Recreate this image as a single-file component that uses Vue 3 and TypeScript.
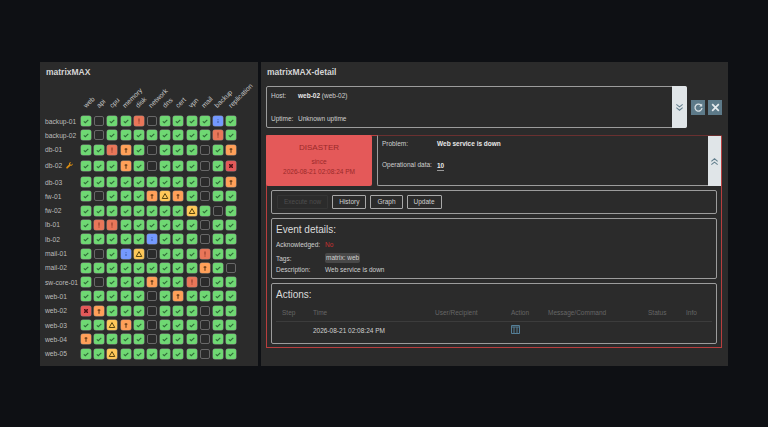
<template>
  <div class="page">
    <!-- 左侧矩阵面板 -->
    <section class="panel matrix-panel">
      <h2 class="panel-title">matrixMAX</h2>
      <div class="matrix-head">
        <div class="host-col"></div>
        <div v-for="c in columns" :key="c" class="col-head"><span>{{ c }}</span></div>
      </div>
      <div v-for="row in rows" :key="row.host" class="matrix-row" :class="{ tall: row.wrench }">
        <div class="host-col host-name">
          {{ row.host }}
          <svg v-if="row.wrench" class="wrench" viewBox="0 0 10 10" width="7" height="7">
            <path d="M9.500 2.200 7.800 3.900 6.200 3.600 5.900 2.100 7.600.5C6.200 0 4.800.5 4.300 1.800c-.2.6-.2 1.100 0 1.700L.6 7.300c-.5.500-.5 1.300 0 1.800s1.300.5 1.800 0l3.900-3.700c1.700.4 3.500-1 3.400-2.900z" fill="#d98c12" />
          </svg>
        </div>
        <div v-for="(s, i) in row.cells.split('')" :key="i" class="cell" :class="'s-' + s">
          <svg v-if="s === 'o'" viewBox="0 0 10 10" width="10" height="10">
            <path d="M2.800 5.300 4.300 6.700 7.300 3.800" fill="none" stroke="#2f6a38" stroke-width="1.100" />
          </svg>
          <svg v-else-if="s === 'h'" viewBox="0 0 10 10" width="10" height="10">
            <path d="M5 2.500v3.200M5 6.600v1" fill="none" stroke="#8f3a2a" stroke-width="1.100" />
          </svg>
          <svg v-else-if="s === 'a'" viewBox="0 0 10 10" width="10" height="10">
            <path d="M5 3v4.800M3.600 4.200h2.800" fill="none" stroke="#5a3414" stroke-width="1" />
          </svg>
          <svg v-else-if="s === 'w'" viewBox="0 0 10 10" width="10" height="10">
            <path d="M5 2.600 7.800 7.500H2.200z" fill="none" stroke="#5a460e" stroke-width="1" />
          </svg>
          <svg v-else-if="s === 'i'" viewBox="0 0 10 10" width="10" height="10">
            <path d="M5 3.200v.7M5 4.800v2.200" fill="none" stroke="#38589f" stroke-width="1" />
          </svg>
          <svg v-else-if="s === 'd'" viewBox="0 0 10 10" width="10" height="10">
            <path d="M3 3h4v4H3z" fill="#8f2a30" />
            <path d="M3 3l4 4M7 3 3 7" fill="none" stroke="#4a1418" stroke-width="1" />
          </svg>
        </div>
      </div>
    </section>

    <!-- 右侧详情面板 -->
    <section class="panel detail-panel">
      <h2 class="panel-title">matrixMAX-detail</h2>

      <div class="host-line">
        <div class="box host-box">
          <div class="host-info">
            <div class="info-row"><span class="info-label">Host:</span><span><b>web-02</b> (web-02)</span></div>
            <div class="info-row"><span class="info-label">Uptime:</span><span>Unknown uptime</span></div>
          </div>
          <div class="side-btn">
            <svg viewBox="0 0 10 10" width="9" height="9">
              <path d="M1.500 1.500 5 4.300 8.500 1.500M1.500 5.200 5 8 8.500 5.200" fill="none" stroke="#64808f" stroke-width="1.200" />
            </svg>
          </div>
        </div>
        <div class="tool-btns">
          <div class="tool-btn">
            <svg viewBox="0 0 12 12" width="11" height="11">
              <path d="M9.300 4.200A3.800 3.800 0 1 0 9.800 6.500" fill="none" stroke="#d8e0e4" stroke-width="1.400" />
              <path d="M10 1.600v3.200H6.800z" fill="#d8e0e4" />
            </svg>
          </div>
          <div class="tool-btn">
            <svg viewBox="0 0 12 12" width="11" height="11">
              <path d="M2.400 2.400 9.600 9.600M9.600 2.400 2.400 9.600" fill="none" stroke="#e6ebee" stroke-width="1.800" />
            </svg>
          </div>
        </div>
      </div>

      <div class="alert">
        <div class="alert-top">
          <div class="severity">
            <div class="sev-name">DISASTER</div>
            <div class="sev-since">since</div>
            <div class="sev-date">2026-08-21 02:08:24 PM</div>
          </div>
          <div class="box problem-box">
            <div class="problem-info">
              <div class="info-row"><span class="problem-label">Problem:</span><b>Web service is down</b></div>
              <div class="info-row"><span class="problem-label">Operational data:</span><b class="op-value">10</b></div>
            </div>
            <div class="side-btn side-flush">
              <svg viewBox="0 0 10 10" width="9" height="9">
                <path d="M1.500 4.800 5 2 8.500 4.800M1.500 8.500 5 5.700 8.500 8.500" fill="none" stroke="#64808f" stroke-width="1.200" />
              </svg>
            </div>
          </div>
        </div>

        <div class="box button-box">
          <span class="action-btn disabled">Execute now</span>
          <span class="action-btn">History</span>
          <span class="action-btn">Graph</span>
          <span class="action-btn">Update</span>
        </div>

        <div class="box section-box event-box">
          <h3 class="section-title">Event details:</h3>
          <div class="event-row ack"><span class="event-label">Acknowledged:</span><span class="no">No</span></div>
          <div class="event-row tags"><span class="event-label">Tags:</span><span class="tag">matrix: web</span></div>
          <div class="event-row"><span class="event-label">Description:</span><span>Web service is down</span></div>
        </div>

        <div class="box section-box actions-box">
          <h3 class="section-title">Actions:</h3>
          <div class="act-grid act-head">
            <span>Step</span><span>Time</span><span>User/Recipient</span><span>Action</span><span>Message/Command</span><span>Status</span><span>Info</span>
          </div>
          <div class="act-grid act-row">
            <span></span><span>2026-08-21 02:08:24 PM</span><span></span>
            <span>
              <svg viewBox="0 0 9 9" width="9" height="9" class="act-icon">
                <path d="M.5.5h8v8h-8zM.5 2h8M3 2v6.500M6 2v6.500" fill="none" stroke="#557f97" stroke-width="1" />
              </svg>
            </span>
            <span></span><span></span><span></span>
          </div>
        </div>
      </div>
    </section>
  </div>
</template>

<script setup lang="ts">
// o 正常 e 空 h 高 a 一般 w 警告 i 信息 d 灾难
const columns = ['web', 'api', 'cpu', 'memory', 'disk', 'network', 'dns', 'cert', 'vpn', 'mail', 'backup', 'replication']

interface Row {
  host: string
  cells: string
  wrench?: boolean
}

const rows: Row[] = [
  { host: 'backup-01', cells: 'oeoohe' + 'ooooio' },
  { host: 'backup-02', cells: 'oeooooooooho' },
  { host: 'db-01', cells: 'oohaoeoooeoa' },
  { host: 'db-02', cells: 'oooaoeoooeod', wrench: true },
  { host: 'db-03', cells: 'oooooooooeoa' },
  { host: 'fw-01', cells: 'oeoooawaoeoo' },
  { host: 'fw-02', cells: 'oooooooowoeo' },
  { host: 'lb-01', cells: 'ohhooooooeoo' },
  { host: 'lb-02', cells: 'oooooioooeoo' },
  { host: 'mail-01', cells: 'oeoiweooohoo' },
  { host: 'mail-02', cells: 'oooooooooaoe' },
  { host: 'sw-core-01', cells: 'oeoooaooheoo' },
  { host: 'web-01', cells: 'oooooeoaoooo' },
  { host: 'web-02', cells: 'daoooeoooeoo' },
  { host: 'web-03', cells: 'oowaoeoooeoo' },
  { host: 'web-04', cells: 'aoooo' + 'eoooeoo' },
  { host: 'web-05', cells: 'oowooooooeoo' }
]
</script>

<style>
html,
body {
  margin: 0;
  background: #0e1014;
}
</style>

<style scoped>
.page {
  width: 768px;
  height: 427px;
  box-sizing: border-box;
  padding: 62px 40px 0;
  display: flex;
  gap: 3px;
  font-family: "Liberation Sans", Arial, sans-serif;
  font-size: 6.5px;
  color: #d0d0d0;
  background: #0e1014;
  overflow: hidden;
}

.panel {
  height: 304px;
  box-sizing: border-box;
  background: #2b2b2b;
  padding: 5px;
}

.panel-title {
  margin: 0;
  padding-left: 1px;
  font-size: 8.5px;
  line-height: 10px;
  font-weight: bold;
  color: #d4d4d4;
}

.matrix-panel {
  width: 218px;
  flex: none;
}

.detail-panel {
  width: 467px;
  flex: none;
  padding-right: 6px;
}

/* 矩阵 */
.matrix-head {
  display: flex;
  height: 37px;
  align-items: flex-end;
}

.host-col {
  width: 36px;
  flex: none;
}

.col-head {
  width: 13.2px;
  flex: none;
  height: 0;
  position: relative;
}

.col-head span {
  position: absolute;
  left: 5.5px;
  bottom: 5px;
  transform: rotate(-45deg);
  transform-origin: left bottom;
  white-space: nowrap;
  font-size: 6.8px;
  color: #c4c4c4;
}

.matrix-row {
  display: flex;
  align-items: center;
  height: 14.3px;
}

.matrix-row.tall {
  height: 18px;
}

.host-name {
  font-size: 6.7px;
  color: #bcbcbc;
  white-space: nowrap;
}

.wrench {
  margin-left: 2px;
  vertical-align: -1px;
}

.cell {
  width: 10px;
  height: 10px;
  margin-right: 3.2px;
  flex: none;
  box-sizing: border-box;
  border-radius: 2px;
  display: flex;
  align-items: center;
  justify-content: center;
}

.cell svg {
  flex: none;
}

.s-o {
  background: #6fd873;
  box-shadow: 0 0 0 .5px #7b8f7c;
}

.s-e {
  border: 1px solid #686868;
}

.s-h {
  background: #e97659;
  box-shadow: 0 0 0 .5px #a0796f;
}

.s-a {
  background: #ffa059;
  box-shadow: 0 0 0 .5px #a8876e;
}

.s-w {
  background: #ffc859;
  box-shadow: 0 0 0 .5px #a8946e;
}

.s-i {
  background: #7499ff;
  box-shadow: 0 0 0 .5px #7885a8;
}

.s-d {
  background: #e45959;
  box-shadow: 0 0 0 .5px #a06e6e;
}

/* 详情 */
.box {
  border: 1px solid #9c9c9c;
  border-radius: 2px;
  box-sizing: border-box;
}

.host-line {
  display: flex;
  align-items: center;
  gap: 4px;
  margin-top: 9px;
}

.host-box {
  width: 421px;
  height: 42px;
  display: flex;
}

.host-info {
  flex: 1;
  padding: 4px 4px 3px;
  display: flex;
  flex-direction: column;
  justify-content: space-between;
}

.info-row {
  display: flex;
  line-height: 10px;
}

.info-label {
  width: 27px;
}

b {
  color: #e8e8e8;
}

.side-btn {
  width: 15px;
  flex: none;
  box-sizing: border-box;
  background: #e0e5e8;
  margin: -1px -1px -1px 0;
  border-radius: 0 2px 2px 0;
  display: flex;
  align-items: center;
  justify-content: center;
}

.tool-btns {
  display: flex;
  gap: 3px;
}

.tool-btn {
  width: 14px;
  height: 15px;
  background: #5d7a89;
  display: flex;
  align-items: center;
  justify-content: center;
}

/* 红框：顶边由 problem-box 画成暗红色 */
.alert {
  margin-top: 7px;
  width: 456px;
  height: 213px;
  box-sizing: border-box;
  border: 1px solid #b83e3e;
}

.alert-top {
  display: flex;
  gap: 5px;
  height: 51px;
  margin: -1px -1px 0 -1px;
}

.severity {
  width: 106px;
  flex: none;
  background: #e45959;
  border-radius: 2px;
  color: #9a2a2a;
  text-align: center;
  box-sizing: border-box;
  padding-top: 7px;
}

.sev-name {
  font-size: 8px;
  line-height: 11px;
}

.sev-since {
  margin-top: 4px;
  line-height: 9px;
}

.sev-date {
  margin-top: 1px;
  line-height: 9px;
}

.problem-box {
  flex: 1;
  display: flex;
  background: #2b2b2b;
  border-top-color: #6a3030;
  border-right: none;
  border-radius: 0 0 0 2px;
}

.problem-info {
  flex: 1;
  padding: 3px 4px;
}

.problem-info .info-row + .info-row {
  margin-top: 11px;
}

.problem-label {
  width: 55px;
}

.op-value {
  border-bottom: 1px solid #999;
  height: 9px;
  line-height: 9px;
  margin-top: 1px;
}

.side-flush {
  margin: 0 0 -1px;
  border-radius: 0;
  width: 14px;
  border-right: 1px solid #b83e3e;
}

.button-box {
  margin: 4px 4px 0;
  height: 24px;
  display: flex;
  align-items: center;
  gap: 4px;
  padding-left: 5px;
}

.action-btn {
  height: 14px;
  box-sizing: border-box;
  border: 1px solid #a8a8a8;
  border-radius: 1px;
  padding: 0 6px;
  line-height: 12px;
  color: #d0d0d0;
}

.action-btn.disabled {
  border-color: #353535;
  color: #4e4e4e;
}

.section-box {
  margin: 4px 4px 0;
  padding: 4px;
}

.section-title {
  margin: 0;
  font-size: 10px;
  line-height: 13px;
  font-weight: normal;
  color: #dcdcdc;
}

.event-box {
  height: 61px;
}

.event-row {
  display: flex;
  align-items: center;
  line-height: 9px;
}

.event-label {
  width: 49px;
  flex: none;
}

.ack {
  margin-top: 4px;
}

.no {
  color: #c93030;
}

.tags {
  margin-top: 4px;
  margin-bottom: 2px;
}

.tag {
  background: #484848;
  border-radius: 2px;
  padding: 1px;
  line-height: 8px;
}

.actions-box {
  height: 61px;
}

.act-grid {
  display: grid;
  grid-template-columns: 31px 122px 76px 37px 100px 38px 1fr;
  line-height: 9px;
  padding-left: 6px;
}

.act-head {
  padding-top: 7px;
  padding-bottom: 4px;
  color: #666;
  border-bottom: 1px solid #3c3c3c;
}

.act-row {
  padding-top: 4px;
}

.act-icon {
  display: block;
  margin-top: -1px;
}
</style>
